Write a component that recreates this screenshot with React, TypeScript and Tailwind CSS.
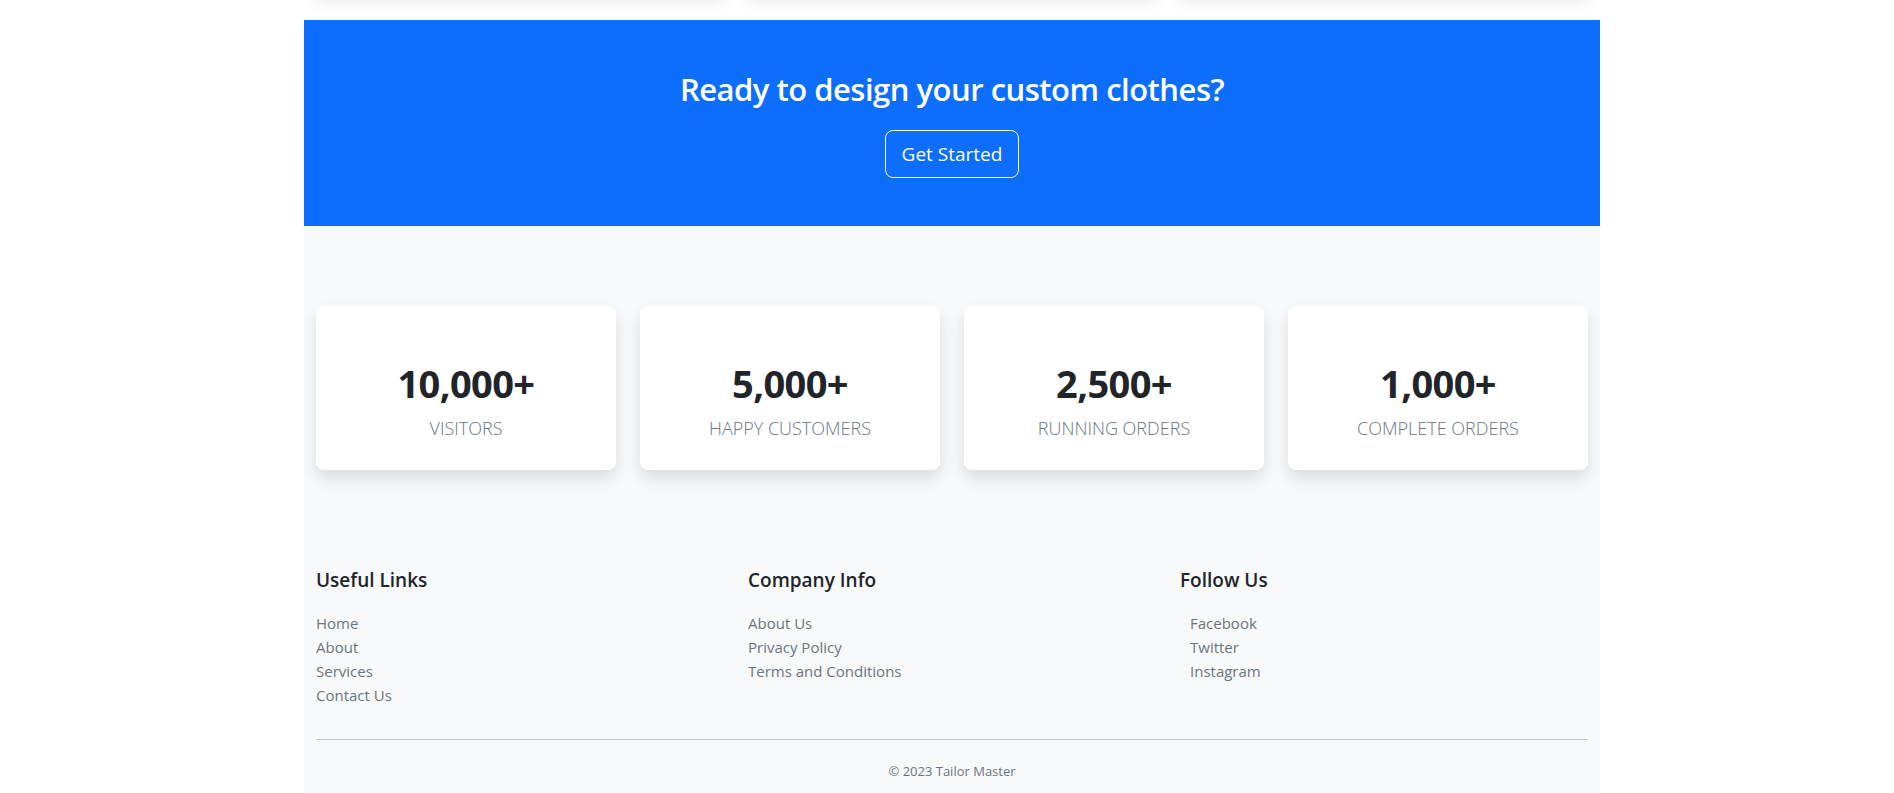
const stats = [
  { value: "10,000+", label: "VISITORS" },
  { value: "5,000+", label: "HAPPY CUSTOMERS" },
  { value: "2,500+", label: "RUNNING ORDERS" },
  { value: "1,000+", label: "COMPLETE ORDERS" },
];

const usefulLinks = ["Home", "About", "Services", "Contact Us"];
const companyLinks = ["About Us", "Privacy Policy", "Terms and Conditions"];
const socialLinks = ["Facebook", "Twitter", "Instagram"];

export default function App() {
  return (
    <div
      className="min-h-[793px] bg-white text-[#212529]"
      style={{ fontFamily: '"Open Sans", "Noto Sans", sans-serif' }}
    >
      <div className="ml-[304px] w-[1296px]">
        {/* Cards of the section above, only their shadows peek in */}
        <div className="grid grid-cols-3 h-[20px]">
          {[0, 1, 2].map((i) => (
            <div key={i} className="px-3">
              <div className="-mt-[120px] h-[112px] rounded-md bg-white shadow-[0_0.5rem_1rem_rgba(0,0,0,0.12)]" />
            </div>
          ))}
        </div>

        {/* Call to action */}
        <section className="bg-[#0d6efd] pt-[50px] pb-12 text-center text-white">
          <h2 className="mb-[22px] text-[31px] font-semibold leading-[38px] tracking-[-0.5px]">
            Ready to design your custom clothes?
          </h2>
          <a
            href="#"
            className="inline-block rounded-lg border border-white px-4 text-[19px] leading-[46px] text-white"
          >
            Get Started
          </a>
        </section>

        {/* Stats */}
        <section className="bg-[#f8f9fa] pt-[80px] pb-12">
          <div className="grid grid-cols-4">
            {stats.map((s) => (
              <div key={s.label} className="px-3">
                <div className="flex h-[164px] flex-col items-center rounded-lg bg-white pt-[54px] shadow-[0_0.5rem_1rem_rgba(0,0,0,0.12)]">
                  <div className="text-[38px] font-bold leading-[46px] tracking-[-0.6px]">{s.value}</div>
                  <div className="mt-[8px] text-[18px] font-light leading-[28px] text-[#6c757d]">
                    {s.label}
                  </div>
                </div>
              </div>
            ))}
          </div>
        </section>

        {/* Footer */}
        <footer className="bg-[#f8f9fa] pt-[50px] px-3">
          <div className="grid grid-cols-3 -mx-3">
            <div className="px-3">
              <h5 className="mb-[19px] text-[19px] font-semibold leading-[24px]">Useful Links</h5>
              <ul className="text-[15px] leading-[24px] text-[#6c757d]">
                {usefulLinks.map((l) => (
                  <li key={l}>{l}</li>
                ))}
              </ul>
            </div>
            <div className="px-3">
              <h5 className="mb-[19px] text-[19px] font-semibold leading-[24px]">Company Info</h5>
              <ul className="text-[15px] leading-[24px] text-[#6c757d]">
                {companyLinks.map((l) => (
                  <li key={l}>{l}</li>
                ))}
              </ul>
            </div>
            <div className="px-3">
              <h5 className="mb-[19px] text-[19px] font-semibold leading-[24px]">Follow Us</h5>
              <ul className="text-[15px] leading-[24px] text-[#6c757d]">
                {socialLinks.map((l) => (
                  <li key={l} className="pl-[10px]">
                    {l}
                  </li>
                ))}
              </ul>
            </div>
          </div>
          <hr className="mt-[32px] border-t border-[#c7c8c9]" />
          <p className="pt-[21px] pb-[12px] text-center text-[13px] leading-[21px] text-[#6c757d]">
            © 2023 Tailor Master
          </p>
        </footer>
      </div>
    </div>
  );
}
